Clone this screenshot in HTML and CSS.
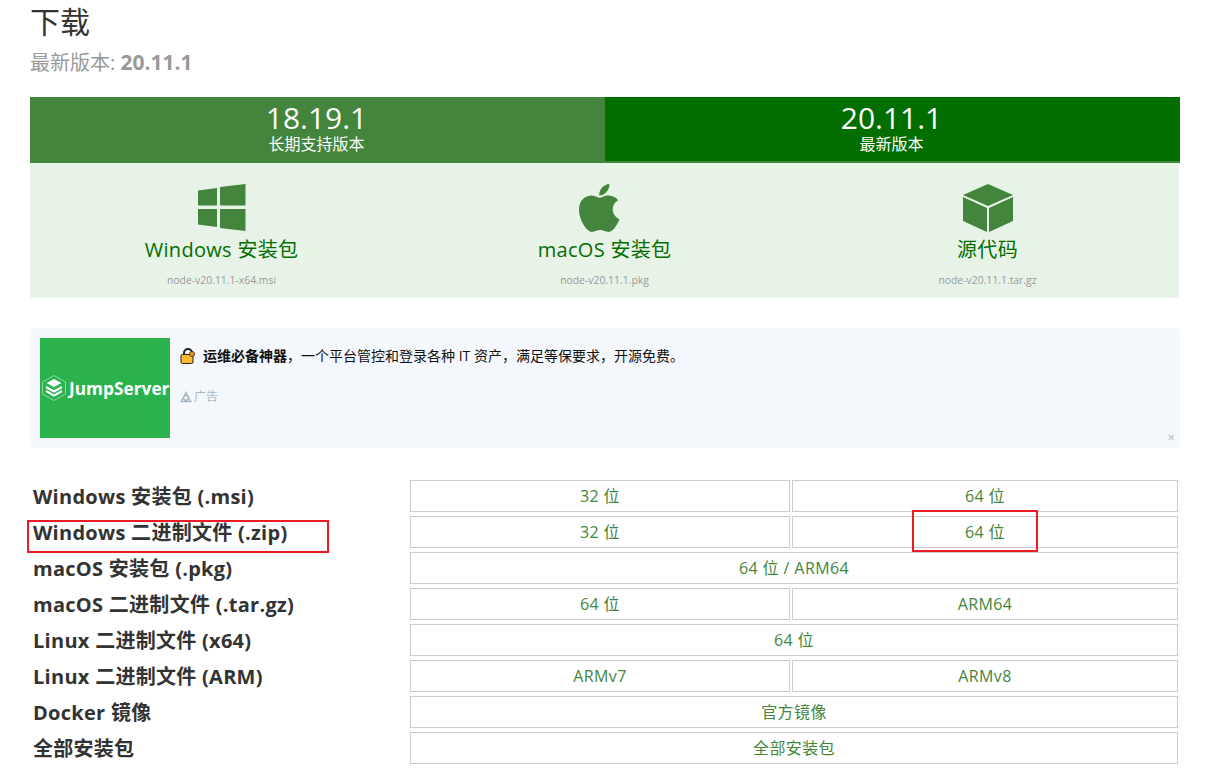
FILE: index.html
```html
<!DOCTYPE html>
<html lang="zh-CN">
<head>
  <meta charset="UTF-8">
  <title>下载</title>
  <link rel="stylesheet" href="styles.css">
</head>
<body>
  <div class="page">
    <h1>下载</h1>
    <p class="latest">最新版本: <b>20.11.1</b></p>

    <div class="tabs">
      <div class="tab tab-lts">
        <div class="tab-num">18.19.1</div>
        <div class="tab-sub">长期支持版本</div>
      </div>
      <div class="tab tab-current">
        <div class="tab-num">20.11.1</div>
        <div class="tab-sub">最新版本</div>
      </div>
    </div>

    <div class="panel">
      <div class="panel-col">
        <svg class="panel-icon" width="48" height="48" viewBox="0 0 48 48">
          <polygon points="0,6.5 19,4 19,21.5 0,21.5"/>
          <polygon points="22,3 47.5,0 47.5,21.5 22,21.5"/>
          <polygon points="0,25 19,25 19,43 0,40.5"/>
          <polygon points="22,25 47.5,25 47.5,47 22,44"/>
        </svg>
        <div class="panel-label">Windows 安装包</div>
        <div class="panel-file">node-v20.11.1-x64.msi</div>
      </div>
      <div class="panel-col">
        <svg class="panel-icon" width="52" height="48" viewBox="4 32 485 448">
          <path d="M318.7 268.7c-.2-36.7 16.4-64.4 50-84.8-18.8-26.9-47.2-41.7-84.7-44.6-35.5-2.8-74.3 20.7-88.5 20.7-15 0-49.4-19.7-76.4-19.7C63.3 141.2 4 184.8 4 273.5q0 39.3 14.4 81.2c12.8 36.7 59 126.7 107.2 125.2 25.2-.6 43-17.9 75.8-17.9 31.8 0 48.3 17.9 76.4 17.9 48.6-.7 90.4-82.5 102.6-119.3-65.2-30.7-61.7-90-61.7-91.9zm-56.6-164.2c27.3-32.4 24.8-61.9 24-72.5-24.1 1.4-52 16.4-67.9 34.9-17.5 19.8-27.8 44.3-25.6 71.9 26.1 2 49.9-11.4 69.5-34.3z"/>
        </svg>
        <div class="panel-label">macOS 安装包</div>
        <div class="panel-file">node-v20.11.1.pkg</div>
      </div>
      <div class="panel-col">
        <svg class="panel-icon" width="50" height="48" viewBox="0 0 50 48">
          <polygon points="25,0 50,11 25,22 0,11"/>
          <polygon points="0,13 24,24 24,48 0,37"/>
          <polygon points="26,24 50,13 50,37 26,48"/>
        </svg>
        <div class="panel-label">源代码</div>
        <div class="panel-file">node-v20.11.1.tar.gz</div>
      </div>
    </div>

    <div class="ad">
      <div class="ad-logo">
        <svg width="24" height="26" viewBox="0 0 24 26">
          <polygon points="12,0.5 23.5,7 23.5,19 12,25.5 0.5,19 0.5,7" fill="none" stroke="#8fdca5" stroke-width="1"/>
          <path d="M12 4l7.5 4-7.5 4-7.5-4z" fill="#fff"/>
          <path d="M4 12l8 4.4 8-4.4M4 16l8 4.6 8-4.6" fill="none" stroke="#fff" stroke-width="2.2"/>
        </svg>
        <span class="ad-logo-text">JumpServer</span>
      </div>
      <div class="ad-body">
        <div class="ad-text"><svg class="ad-lock" width="16" height="16" viewBox="0 0 16 16">
            <path d="M4 8V5a4 4 0 0 1 8 0v3" fill="none" stroke="#222" stroke-width="2"/>
            <rect x="1" y="6.5" width="12" height="9" rx="1.5" fill="#fbb92d" stroke="#222"/>
            <circle cx="12" cy="6" r="2.6" fill="#f08c1e" stroke="#222" stroke-width=".7"/>
          </svg><b>运维必备神器</b>，一个平台管控和登录各种 IT 资产，满足等保要求，开源免费。</div>
        <div class="ad-tag">
          <svg width="12" height="12" viewBox="0 0 12 12">
            <path d="M6 1.5L10.8 10.5H1.2zM6 4.5a2.4 2.4 0 1 0 .01 0" fill="none" stroke="#a9b8c6" stroke-width="1.5"/>
          </svg>
          广告
        </div>
      </div>
      <span class="ad-close">×</span>
    </div>

    <div class="downloads">
      <div class="dl-name">Windows 安装包 (.msi)</div>
      <a class="dl-cell">32 位</a>
      <a class="dl-cell">64 位</a>

      <div class="dl-name">Windows 二进制文件 (.zip)</div>
      <a class="dl-cell">32 位</a>
      <a class="dl-cell">64 位</a>

      <div class="dl-name">macOS 安装包 (.pkg)</div>
      <a class="dl-cell dl-wide">64 位 / ARM64</a>

      <div class="dl-name">macOS 二进制文件 (.tar.gz)</div>
      <a class="dl-cell">64 位</a>
      <a class="dl-cell">ARM64</a>

      <div class="dl-name">Linux 二进制文件 (x64)</div>
      <a class="dl-cell dl-wide">64 位</a>

      <div class="dl-name">Linux 二进制文件 (ARM)</div>
      <a class="dl-cell">ARMv7</a>
      <a class="dl-cell">ARMv8</a>

      <div class="dl-name">Docker 镜像</div>
      <a class="dl-cell dl-wide">官方镜像</a>

      <div class="dl-name">全部安装包</div>
      <a class="dl-cell dl-wide">全部安装包</a>
    </div>
  </div>

  <div class="mark mark-name"></div>
  <div class="mark mark-cell"></div>
</body>
</html>
```

FILE: styles.css
```css
body {
  margin: 0;
  background: #fff;
  font-family: "Open Sans", "Noto Sans CJK SC", sans-serif;
  color: #333;
}
.page {
  width: 1150px;
  margin-left: 30px;
}
h1 {
  margin: 0;
  font-size: 30px;
  font-weight: normal;
  line-height: 44px;
}
.latest {
  height: 28px;
  margin: 4px 0 21px;
  font-size: 20px;
  line-height: 28px;
  color: #999;
}
.latest b {
  font-size: 21px;
}

.tabs {
  display: grid;
  grid-template-columns: 1fr 1fr;
  height: 66px;
}
.tab {
  box-sizing: border-box;
  color: #fff;
  text-align: center;
  padding: 4px 2px 0 0;
}
.tab-lts {
  background: #43853d;
}
.tab-current {
  background: #026e00;
  border-bottom: 2px solid #43853d;
}
.tab-num {
  font-size: 30px;
  line-height: 34px;
}
.tab-sub {
  font-size: 16px;
  line-height: 18px;
}

.panel {
  display: grid;
  grid-template-columns: repeat(3, 1fr);
  width: 1149px;
  height: 135px;
  background: #e8f3e8;
}
.panel-col {
  text-align: center;
  padding-top: 21px;
}
.panel-icon {
  display: block;
  margin: 0 auto;
  fill: #43853d;
}
.panel-label {
  margin-top: 4px;
  font-size: 20px;
  line-height: 28px;
  letter-spacing: 0.3px;
  color: #026e00;
}
.panel-file {
  margin-top: 9px;
  font-size: 10.4px;
  line-height: 14px;
  color: #999;
}

.ad {
  position: relative;
  display: flex;
  gap: 10px;
  height: 100px;
  margin-top: 30px;
  padding: 10px;
  background: #f4f7fb;
  border-radius: 4px;
}
.ad-logo {
  display: flex;
  align-items: center;
  gap: 3px;
  width: 130px;
  padding-left: 2px;
  box-sizing: border-box;
  background: #2ab24c;
  overflow: hidden;
}
.ad-logo-text {
  color: #fff;
  font-weight: bold;
  font-size: 17.3px;
}
.ad-body {
  font-size: 12px;
}
.ad-text {
  margin-top: 9px;
  font-size: 14px;
  line-height: 18px;
  color: #111;
  white-space: nowrap;
}
.ad-lock {
  margin-right: 7px;
  vertical-align: -3px;
}
.ad-tag {
  display: flex;
  align-items: center;
  gap: 2px;
  margin-top: 23px;
  line-height: 18px;
  color: #a9b8c6;
}
.ad-close {
  position: absolute;
  right: 5px;
  bottom: 2px;
  font-size: 13px;
  color: #a9b8c6;
}

.downloads {
  display: grid;
  grid-template-columns: 378px 380px 386px;
  grid-auto-rows: 32px;
  column-gap: 2px;
  row-gap: 4px;
  margin-top: 32px;
}
.dl-name {
  padding: 1px 0 0 3px;
  font-size: 20px;
  font-weight: bold;
  line-height: 31px;
  letter-spacing: 0.28px;
  white-space: nowrap;
}
.dl-cell {
  box-sizing: border-box;
  border: 1px solid #ccc;
  font-size: 16px;
  line-height: 30px;
  letter-spacing: 0.4px;
  text-align: center;
  color: #43853d;
}
.dl-wide {
  grid-column: span 2;
}

/* red annotation boxes drawn over the table */
.mark {
  position: absolute;
  box-sizing: border-box;
  border: 2px solid #ed1c24;
}
.mark-name {
  left: 27px;
  top: 520px;
  width: 302px;
  height: 33px;
}
.mark-cell {
  left: 912px;
  top: 510px;
  width: 126px;
  height: 42px;
}
```
